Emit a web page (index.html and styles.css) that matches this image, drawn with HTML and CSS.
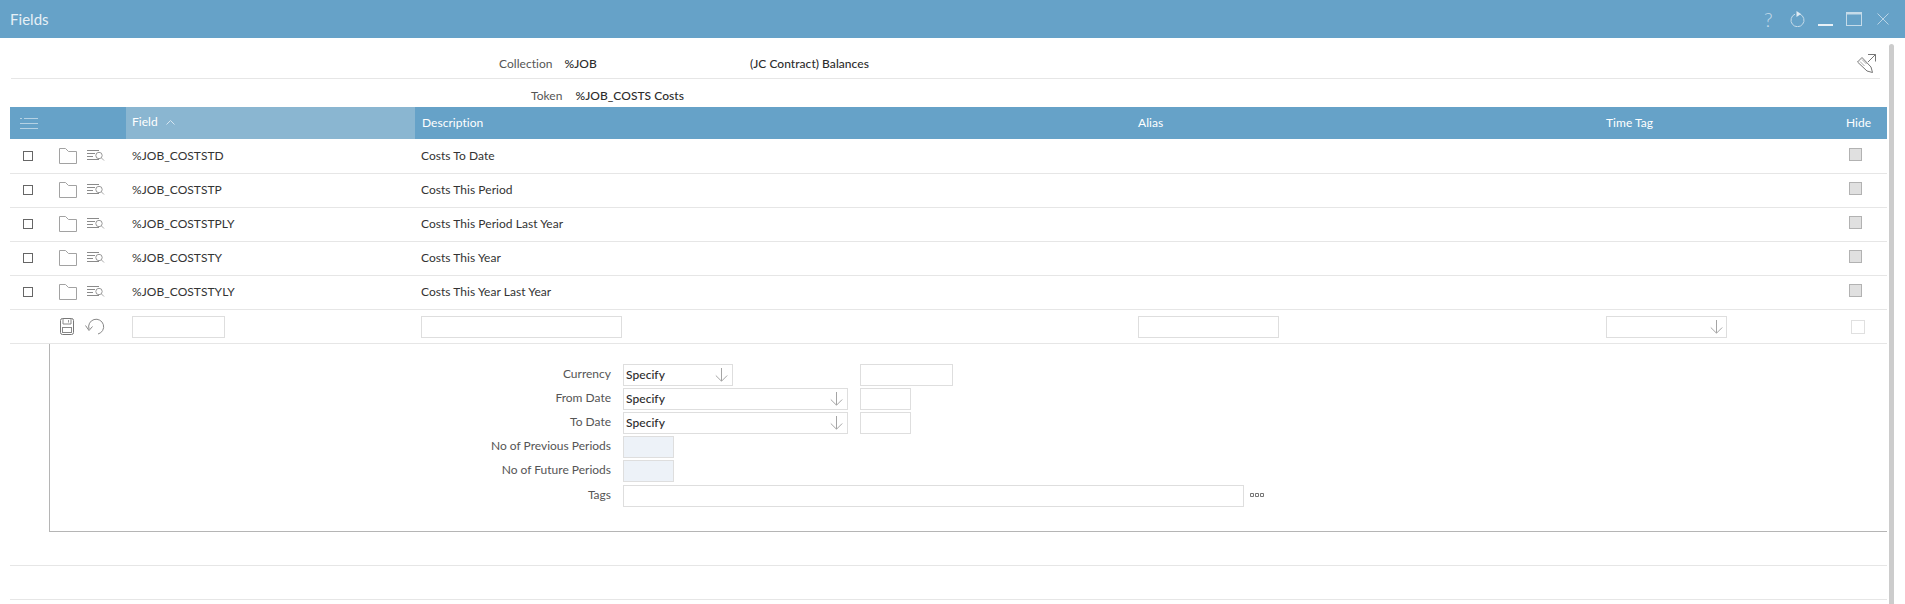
FILE: index.html
```html
<!DOCTYPE html>
<html lang="en">
<head>
<meta charset="utf-8">
<title>Fields</title>
<link rel="stylesheet" href="styles.css">
</head>
<body>
<svg class="defs" width="0" height="0" aria-hidden="true">
  <symbol id="i-folder" viewBox="0 0 18 16"><path d="M.5 15.500v-15h6l3 3h8v12z" fill="none" stroke="#a2a2a2"/></symbol>
  <symbol id="i-find" viewBox="0 0 18 12"><path d="M0 .5h12M0 3.500h8M0 6.500h6M0 9.500h12" stroke="#8a8a8a" fill="none"/><circle cx="12" cy="5.500" r="3.200" fill="none" stroke="#999"/><path d="M14.500 8l2.500 2.500" stroke="#aaa" fill="none"/></symbol>
  <symbol id="i-arrow" viewBox="0 0 13 14"><path d="M6.500 0v13M.8 7.500l5.700 5.700 5.700-5.700" fill="none" stroke="#a5a5a5"/></symbol>
</svg>

<header class="titlebar">
  <span class="title">Fields</span>
  <div class="win-tools">
    <span class="win-help">?</span>
    <svg class="win-refresh" width="18" height="16" viewBox="0 0 18 16"><path d="M6 3.200a6.500 6.500 0 1 0 5 0" fill="none" stroke="#c5dbe9" stroke-width="1"/><path d="M7.500 0l4.500 3-4.500 3z" fill="#e0ecf4"/></svg>
    <svg class="win-min" width="15" height="14" viewBox="0 0 15 14"><path d="M0 13h15" stroke="#e8f1f7" stroke-width="2"/></svg>
    <svg class="win-max" width="16" height="14" viewBox="0 0 16 14"><rect x=".5" y=".5" width="15" height="13" fill="none" stroke="#c5dbe9"/><path d="M0 1.500h16" stroke="#c5dbe9" stroke-width="2"/></svg>
    <svg class="win-close" width="12" height="12" viewBox="0 0 12 12"><path d="M.5.5l11 11M11.500.5l-11 11" stroke="#b9d4e6" fill="none"/></svg>
  </div>
</header>

<main class="content">
  <div class="info info-collection">
    <span class="info-label">Collection</span>
    <span class="info-value info-code">%JOB</span>
    <span class="info-value">(JC Contract) Balances</span>
    <svg class="edit-icon" width="20" height="20" viewBox="0 0 20 20"><path d="M.5 8l4.500-4.500 9 9.500 1.500 5.500-5.500-1.500z" fill="none" stroke="#777"/><path d="M2.500 10l4.500-4.500M4.500 12l4.500-4.500" stroke="#aaa" fill="none" transform="rotate(90 6 9)"/><path d="M11 8l7.500-7.500M11 .5h7.500v7" fill="none" stroke="#777"/></svg>
  </div>
  <div class="info info-token">
    <span class="info-label">Token</span>
    <span class="info-value">%JOB_COSTS Costs</span>
  </div>

  <div class="table">
    <div class="row head">
      <div class="cell cell-menu">
        <svg width="18" height="11" viewBox="0 0 18 11"><path d="M4 .5h14M0 .5h2M0 5.500h18M0 10.500h18" stroke="#b5d2e4" fill="none"/></svg>
      </div>
      <div class="cell cell-sorted">Field
        <svg class="caret" width="9" height="5" viewBox="0 0 9 5"><path d="M.5 4.500l4-4 4 4" fill="none" stroke="#d5e5f0"/></svg>
      </div>
      <div class="cell cell-desc-head">Description</div>
      <div class="cell">Alias</div>
      <div class="cell">Time Tag</div>
      <div class="cell cell-hide-head">Hide</div>
    </div>

    <div class="rows">
      <div class="row item">
        <div class="cell cell-tools"><span class="check"></span><svg class="ic-folder" width="18" height="16"><use href="#i-folder"/></svg><svg class="ic-find" width="18" height="12"><use href="#i-find"/></svg></div>
        <div class="cell">%JOB_COSTSTD</div><div class="cell">Costs To Date</div><div class="cell"></div><div class="cell"></div>
        <div class="cell cell-hide"><span class="hide-box"></span></div>
      </div>
      <div class="row item">
        <div class="cell cell-tools"><span class="check"></span><svg class="ic-folder" width="18" height="16"><use href="#i-folder"/></svg><svg class="ic-find" width="18" height="12"><use href="#i-find"/></svg></div>
        <div class="cell">%JOB_COSTSTP</div><div class="cell">Costs This Period</div><div class="cell"></div><div class="cell"></div>
        <div class="cell cell-hide"><span class="hide-box"></span></div>
      </div>
      <div class="row item">
        <div class="cell cell-tools"><span class="check"></span><svg class="ic-folder" width="18" height="16"><use href="#i-folder"/></svg><svg class="ic-find" width="18" height="12"><use href="#i-find"/></svg></div>
        <div class="cell">%JOB_COSTSTPLY</div><div class="cell">Costs This Period Last Year</div><div class="cell"></div><div class="cell"></div>
        <div class="cell cell-hide"><span class="hide-box"></span></div>
      </div>
      <div class="row item">
        <div class="cell cell-tools"><span class="check"></span><svg class="ic-folder" width="18" height="16"><use href="#i-folder"/></svg><svg class="ic-find" width="18" height="12"><use href="#i-find"/></svg></div>
        <div class="cell">%JOB_COSTSTY</div><div class="cell">Costs This Year</div><div class="cell"></div><div class="cell"></div>
        <div class="cell cell-hide"><span class="hide-box"></span></div>
      </div>
      <div class="row item">
        <div class="cell cell-tools"><span class="check"></span><svg class="ic-folder" width="18" height="16"><use href="#i-folder"/></svg><svg class="ic-find" width="18" height="12"><use href="#i-find"/></svg></div>
        <div class="cell">%JOB_COSTSTYLY</div><div class="cell">Costs This Year Last Year</div><div class="cell"></div><div class="cell"></div>
        <div class="cell cell-hide"><span class="hide-box"></span></div>
      </div>

      <div class="row item">
        <div class="cell cell-edit">
          <svg width="14" height="17" viewBox="0 0 14 17"><rect x=".5" y=".5" width="13" height="16" rx="2" fill="none" stroke="#777"/><path d="M3 .5v5.500h8v-5.500" fill="none" stroke="#888"/><rect x="2.500" y="9.500" width="9" height="5" fill="none" stroke="#888"/><path d="M8.500 2v2.500" stroke="#999"/></svg>
          <svg class="ic-undo" width="20" height="17" viewBox="0 0 20 17"><path d="M4 11a7.500 7.500 0 1 1 9 5" fill="none" stroke="#888"/><path d="M.5 7.500l3.500 5 3.500-4" fill="none" stroke="#888"/></svg>
        </div>
        <div class="cell cell-flat"><input class="field w-field" type="text"></div>
        <div class="cell cell-flat"><input class="field w-desc" type="text"></div>
        <div class="cell cell-flat"><input class="field w-alias" type="text"></div>
        <div class="cell cell-flat"><div class="field select w-time"><svg width="13" height="14"><use href="#i-arrow"/></svg></div></div>
        <div class="cell cell-hide-new"><span class="hide-new"></span></div>
      </div>

      <section class="panel">
        <div class="form">
          <label class="form-label">Currency</label>
          <div class="form-controls"><div class="field select w-currency">Specify<svg width="13" height="14"><use href="#i-arrow"/></svg></div></div>
          <input class="field w-amount" type="text">

          <label class="form-label">From Date</label>
          <div class="field select">Specify<svg width="13" height="14"><use href="#i-arrow"/></svg></div>
          <input class="field w-small" type="text">

          <label class="form-label">To Date</label>
          <div class="field select">Specify<svg width="13" height="14"><use href="#i-arrow"/></svg></div>
          <input class="field w-small" type="text">

          <label class="form-label">No of Previous Periods</label>
          <input class="field w-small readonly form-wide" type="text">

          <label class="form-label">No of Future Periods</label>
          <input class="field w-small readonly form-wide" type="text">

          <label class="form-label tags-label">Tags</label>
          <div class="tags form-wide">
            <input class="field w-tags" type="text">
            <svg class="dots" width="14" height="5" viewBox="0 0 14 5"><path d="M.5.500h3v3h-3zM5.500.500h3v3h-3zM10.500.500h3v3h-3z" fill="none" stroke="#777"/></svg>
          </div>
        </div>
      </section>

      <div class="row item"></div>
      <div class="row item"></div>
    </div>
  </div>
  <div class="scrollbar"></div>
</main>
</body>
</html>
```

FILE: styles.css
```css
* { box-sizing: border-box; }
html, body { margin: 0; height: 100%; overflow: hidden; background: #fff; }
body { font: 12px/16px Lato, "Liberation Sans", sans-serif; color: #333; letter-spacing: .04px; }
.defs { position: absolute; }

.titlebar { height: 38px; background: #66a2c8; display: flex; align-items: center; justify-content: space-between; padding: 0 16px 0 10px; }
.title { font-size: 15px; color: #e6f0f6; }
.win-tools { display: flex; align-items: center; }
.win-help { width: 10px; font-size: 20px; line-height: 20px; color: #c5dbe9; margin-right: 15px; font-weight: 300; }
.win-min { margin-left: 11px; }
.win-max { margin-left: 13px; }
.win-close { margin-left: 15px; }

.content { position: relative; padding-left: 10px; }
.info { display: flex; align-items: center; color: #333; }
.info-collection { height: 41px; margin: 0 25px 0 1px; border-bottom: 1px solid #e6e6e6; padding: 22px 3px 11px 488px; }
.info-token { height: 28px; padding: 9px 0 4px 521px; }
.info-label { color: #555; }
.info-collection .info-label { margin-right: 12px; }
.info-token .info-label { margin-right: 13px; }
.info-code { margin-right: 153px; }
.info-value { font-weight: 500; color: #2c2c2c; }
.edit-icon { margin-left: auto; flex: none; }

.table { width: 1877px; }
.row { display: grid; grid-template-columns: 116px 289px 717px 468px 240px 47px; }
.head { height: 32px; background: #66a2c8; color: #fff; }
.rows { padding-top: 1px; }
.item { height: 34px; border-bottom: 1px solid #e6e6e6; }
.cell { padding: 0 6px 2px; display: flex; align-items: center; min-width: 0; }
.head .cell { padding-bottom: 0; }
.cell-flat { padding-bottom: 0; }
.cell-menu { padding-left: 10px; }
.head .cell-sorted { background: #8ab6d1; padding-bottom: 2px; }
.caret { margin-left: 8px; }
.cell-desc-head { padding-left: 7px; }
.cell-hide-head { padding-left: 6px; }

.cell-tools { padding: 0 0 2px 13px; }
.check { width: 10px; height: 10px; border: 1px solid #666; flex: none; }
.ic-folder { margin-left: 26px; flex: none; }
.ic-find { margin-left: 10px; flex: none; }
.cell-hide { padding: 0 0 4px 9px; }
.hide-box { width: 13px; height: 13px; background: #e0e0e0; border: 1px solid #b2b2b2; }
.cell-edit { padding: 0 0 1px 50px; }
.ic-undo { margin-left: 11px; }
.cell-hide-new { padding: 0 0 0 11px; }
.hide-new { width: 14px; height: 14px; border: 1px solid #e0e0e0; }

.field { height: 22px; border: 1px solid #dedede; background: #fff; padding: 0 2px; font: inherit; font-weight: 500; color: #2c2c2c; margin: 0; display: block; }
.select { display: flex; align-items: center; padding-right: 4px; }
.select svg { margin-left: auto; }
.w-field { width: 93px; }
.w-desc { width: 201px; }
.w-alias { width: 141px; }
.w-time { width: 121px; padding-right: 3px; }
.w-currency { width: 110px; }
.w-amount { width: 93px; }
.w-small { width: 51px; }
.w-tags { width: 621px; }
.readonly { background: #edf2f8; }

.panel { height: 188px; margin-left: 39px; border-left: 1px solid #b5b5b5; border-bottom: 1px solid #b5b5b5; padding-top: 20px; }
.form { display: grid; grid-template-columns: 561px 225px 1fr; grid-auto-rows: 22px; row-gap: 2px; column-gap: 12px; }
.form-label { text-align: right; color: #555; line-height: 20px; letter-spacing: 0; }
.form-wide { grid-column: 2 / span 2; }
.tags-label { margin-top: 1px; }
.tags { display: flex; align-items: center; margin-top: 1px; }
.dots { margin-left: 6px; }

.scrollbar { position: absolute; left: 1889px; top: 6px; width: 5px; height: 560px; background: #ccc; border-radius: 3px 3px 0 0; }
```
